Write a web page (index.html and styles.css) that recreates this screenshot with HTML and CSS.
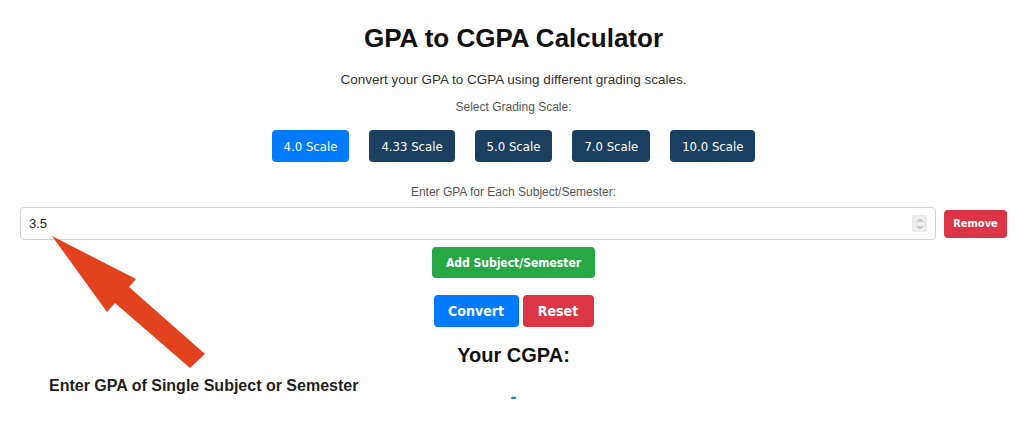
FILE: index.html
```html
<!DOCTYPE html>
<html lang="en">
<head>
    <meta charset="UTF-8">
    <meta name="viewport" content="width=device-width, initial-scale=1.0">
    <title>GPA to CGPA Calculator</title>
    <link rel="stylesheet" href="styles.css">
</head>
<body>
    <div class="calculator">
        <h1>GPA to CGPA Calculator</h1>
        <p class="intro">Convert your GPA to CGPA using different grading scales.</p>
        <p class="label">Select Grading Scale:</p>

        <div class="scales">
            <button class="scale active">4.0 Scale</button>
            <button class="scale">4.33 Scale</button>
            <button class="scale">5.0 Scale</button>
            <button class="scale">7.0 Scale</button>
            <button class="scale">10.0 Scale</button>
        </div>

        <p class="label label-gpa">Enter GPA for Each Subject/Semester:</p>

        <div class="gpa-row">
            <div class="gpa-input">
                <input type="text" value="3.5">
                <span class="spinner">
                    <svg width="8" height="14" viewBox="0 0 8 14">
                        <path d="M1.5 5 L4 2.5 L6.5 5" fill="none" stroke="#9a9a9a" stroke-width="1"/>
                        <path d="M1.5 9 L4 11.5 L6.5 9" fill="none" stroke="#9a9a9a" stroke-width="1"/>
                    </svg>
                </span>
            </div>
            <button class="btn btn-red btn-small">Remove</button>
        </div>

        <button class="btn btn-green btn-add">Add Subject/Semester</button>

        <div class="actions">
            <button class="btn btn-blue">Convert</button>
            <button class="btn btn-red">Reset</button>
        </div>

        <h2>Your CGPA:</h2>
        <p class="result">-</p>
    </div>

    <!-- annotation over the screenshot -->
    <svg class="arrow" width="220" height="150" viewBox="0 0 220 150">
        <polygon points="52,236 136,279 129,287 205,354 190,368 115,303 107,312" transform="translate(0,-226)" fill="#e2431e"/>
    </svg>
    <p class="note">Enter GPA of Single Subject or Semester</p>
</body>
</html>
```

FILE: styles.css
```css
body {
    font-family: "Liberation Sans", Arial, sans-serif;
    margin: 0;
    padding: 0;
    background-color: #ffffff;
    color: #222;
    position: relative;
}
.calculator {
    display: flex;
    flex-direction: column;
    align-items: center;
    padding: 0 17px 0 20px;
}
h1 {
    font-size: 26px;
    line-height: 30px;
    margin: 23px 0 0;
    color: #111;
}
.intro {
    font-size: 13.5px;
    line-height: 18px;
    margin: 18px 0 0;
    color: #333;
}
.label {
    font-size: 12px;
    line-height: 16px;
    margin: 10px 0 0;
    color: #555;
}
.scales {
    display: flex;
    gap: 20px;
    margin-top: 15px;
}
button {
    font-family: "DejaVu Sans Condensed", "Liberation Sans Narrow", sans-serif;
    border: none;
    border-radius: 4px;
    color: #fff;
    cursor: pointer;
}
.scale {
    height: 32px;
    padding: 0 12px;
    font-size: 13px;
    background-color: #1b3f5f;
}
.scale.active {
    background-color: #007bff;
}
.label-gpa {
    margin-top: 22px;
}
.gpa-row {
    display: flex;
    align-items: center;
    gap: 8px;
    align-self: stretch;
    margin-top: 7px;
}
.gpa-input {
    flex: 1;
    display: flex;
    align-items: center;
    height: 31px;
    border: 1px solid #d4d4d4;
    border-radius: 4px;
    padding: 0 8px 0 8px;
}
.gpa-input input {
    flex: 1;
    border: none;
    outline: none;
    padding: 0;
    font-family: "Liberation Sans", Arial, sans-serif;
    font-size: 13px;
    color: #222;
}
.spinner {
    display: flex;
    align-items: center;
    justify-content: center;
    width: 15px;
    height: 17px;
    background-color: #ececec;
    border-radius: 2px;
}
.btn {
    font-weight: bold;
    padding: 0 14px;
}
.btn-small {
    height: 28px;
    width: 63px;
    padding: 0;
    font-size: 11px;
}
.btn-green {
    background-color: #28a745;
}
.btn-red {
    background-color: #dc3545;
}
.btn-blue {
    background-color: #007bff;
}
.btn-add {
    height: 31px;
    width: 163px;
    padding: 0;
    font-size: 12px;
    margin-top: 7px;
}
.actions {
    display: flex;
    gap: 4px;
    margin-top: 17px;
}
.actions .btn {
    height: 32px;
    font-size: 14px;
}
.actions .btn-blue {
    width: 85px;
}
.actions .btn-red {
    width: 71px;
}
h2 {
    font-size: 20px;
    line-height: 24px;
    margin: 16px 0 0;
    color: #111;
}
.result {
    font-size: 18px;
    line-height: 24px;
    font-weight: bold;
    color: #2a7ad0;
    margin: 18px 0 0;
}
.arrow {
    position: absolute;
    left: 0;
    top: 226px;
}
.note {
    position: absolute;
    left: 49px;
    top: 376px;
    margin: 0;
    font-size: 16px;
    line-height: 20px;
    font-weight: bold;
    color: #1f1f1f;
}
```
